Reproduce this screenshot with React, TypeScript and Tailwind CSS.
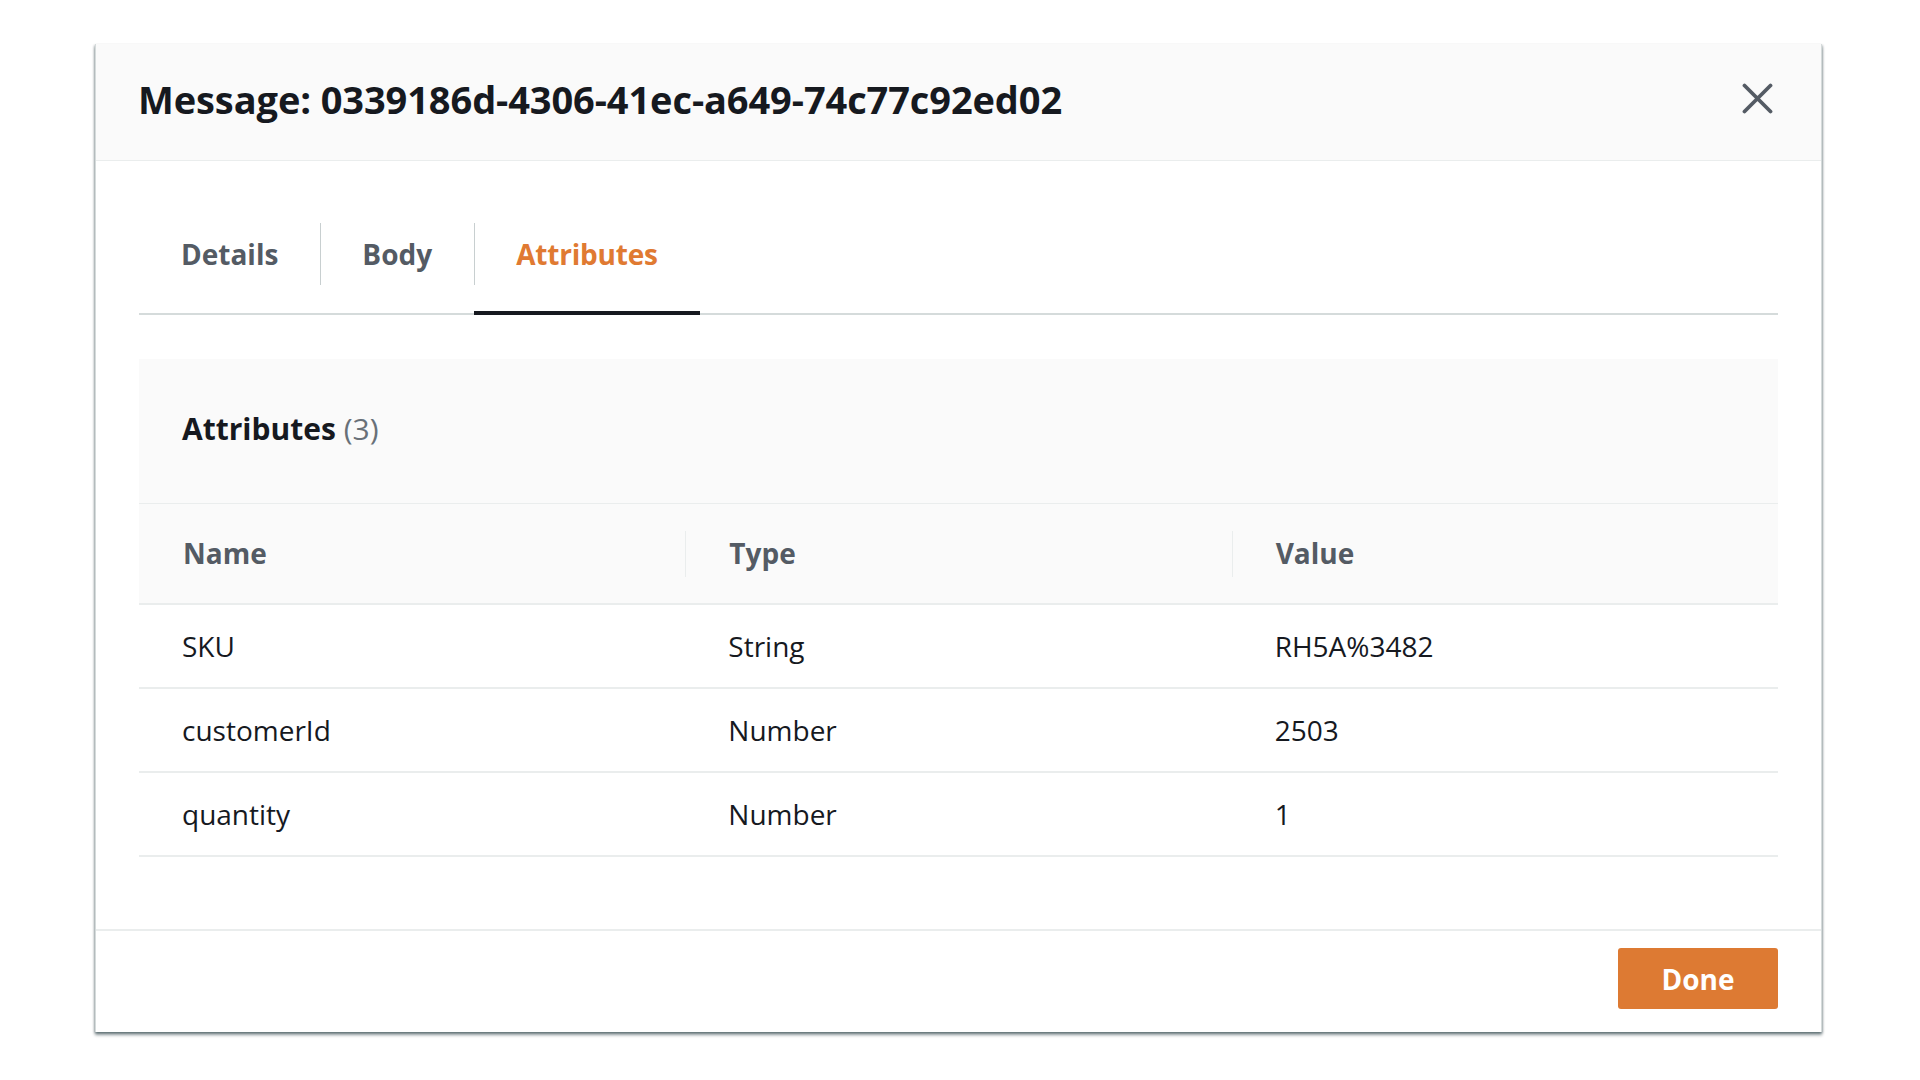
import React from "react";

const rows = [
  { name: "SKU", type: "String", value: "RH5A%3482" },
  { name: "customerId", type: "Number", value: "2503" },
  { name: "quantity", type: "Number", value: "1" },
];

const tabs = ["Details", "Body", "Attributes"];

export default function App() {
  return (
    <div
      className="w-[1920px] h-[1080px] bg-white overflow-hidden pt-[44px] pl-[95px]"
      style={{ fontFamily: '"Open Sans", "Noto Sans", sans-serif' }}
    >
      <div className="w-[1727px] bg-white border-l border-r border-[#d5dbdb] shadow-[0_3px_3px_rgba(0,28,36,0.45),1px_1px_2px_rgba(0,28,36,0.2),-1px_1px_2px_rgba(0,28,36,0.2)] flex flex-col">
        {/* Header */}
        <div className="h-[117px] bg-[#fafafa] border-b border-[#eaeded] flex items-center justify-between pl-[42px] pr-[48px] pb-[7px]">
          <h1 className="text-[38px] font-bold text-[#16191f] leading-none tracking-[-0.1px]">
            Message: 0339186d-4306-41ec-a649-74c77c92ed02
          </h1>
          <svg width="31" height="31" viewBox="0 0 31 31" className="text-[#545b64]">
            <path d="M2.5 2.5 L28.5 28.5 M28.5 2.5 L2.5 28.5" stroke="currentColor" strokeWidth="3.8" strokeLinecap="round" />
          </svg>
        </div>

        {/* Body */}
        <div className="px-[43px] pt-[39px] pb-[72px]">
          <div className="flex border-b-2 border-[#d5dbdb]">
            {tabs.map((t, i) => {
              const active = t === "Attributes";
              return (
                <div key={t} className="relative h-[113px] flex items-center px-[42px] pb-[5px]">
                  {i > 0 && <div className="absolute left-0 top-[23px] h-[62px] w-px bg-[#c8cfd0]" />}
                  <span
                    className={`text-[28px] font-bold leading-none ${active ? "text-[#e07a32] tracking-[-0.2px]" : "text-[#545b64]"}`}
                  >
                    {t}
                  </span>
                  {active && <div className="absolute left-0 right-0 bottom-[-2px] h-[4px] bg-[#16191f]" />}
                </div>
              );
            })}
          </div>

          <div className="mt-[44px]">
            <div className="bg-[#fafafa] h-[145px] flex items-center px-[43px] pb-[4px] border-b border-[#eaeded]">
              <span className="text-[30px] font-bold text-[#16191f] leading-none">
                Attributes <span className="font-normal text-[#687078]">(3)</span>
              </span>
            </div>
            <div className="grid grid-cols-3 bg-[#fafafa] h-[101px] border-b-2 border-[#eaeded]">
              {["Name", "Type", "Value"].map((h, i) => (
                <div key={h} className="relative flex items-center px-[44px] pb-[2px]">
                  {i > 0 && <div className="absolute left-0 top-[27px] h-[46px] w-px bg-[#eaeded]" />}
                  <span className="text-[28px] font-bold text-[#545b64] leading-none">{h}</span>
                </div>
              ))}
            </div>
            {rows.map((r) => (
              <div key={r.name} className="grid grid-cols-3 h-[84px] border-b-2 border-[#eaeded]">
                <div className="flex items-center px-[43px] text-[28px] text-[#16191f] leading-none">{r.name}</div>
                <div className="flex items-center px-[43px] text-[28px] text-[#16191f] leading-none">{r.type}</div>
                <div className="flex items-center px-[43px] text-[28px] text-[#16191f] leading-none">{r.value}</div>
              </div>
            ))}
          </div>
        </div>

        {/* Footer */}
        <div className="border-t-2 border-[#eaeded] flex justify-end pt-[17px] pb-[23px] pr-[43px]">
          <button className="w-[160px] h-[61px] rounded-[3px] bg-[#dd7a33] text-white text-[28px] font-bold leading-none flex items-center justify-center">
            Done
          </button>
        </div>
      </div>
    </div>
  );
}
